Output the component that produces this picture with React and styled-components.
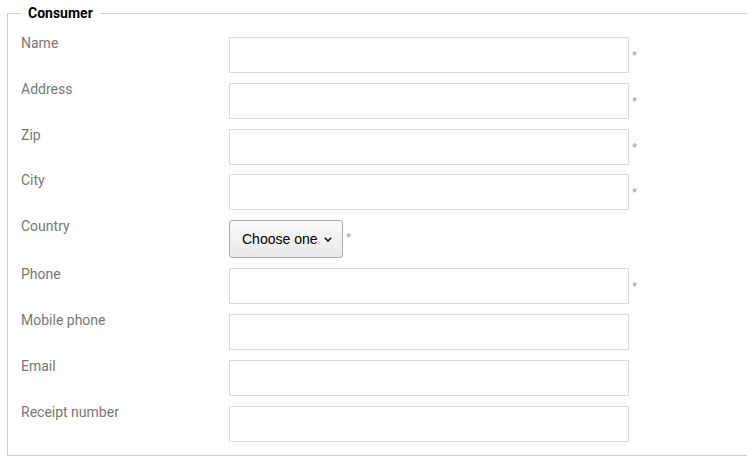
import React from "react";
import styled, { createGlobalStyle } from "styled-components";

const GlobalStyle = createGlobalStyle`
    html, body {
        margin: 0;
        padding: 0;
        background: #fff;
        overflow: hidden;
    }
    body {
        font-family: Roboto, "Liberation Sans", Arial, sans-serif;
    }
`

const Fieldset = styled.fieldset`
    margin: 3px 0 0 7px;
    width: 760px;
    box-sizing: border-box;
    border: 1px solid #cfcfcf;
    padding: 14px 13px 13px 13px;
    min-width: 0;
`

const Legend = styled.legend`
    font-family: Roboto, sans-serif;
    font-weight: 700;
    font-size: 14px;
    line-height: 20px;
    color: #000;
    padding: 0 7px;
`

const Rows = styled.div`
    display: flex;
    flex-direction: column;
    gap: 10px;
`

const Row = styled.div`
    display: flex;
    align-items: flex-start;
    margin-top: ${p => p.$pull ? -1 : 0}px;
`

const Label = styled.label`
    width: 208px;
    flex-shrink: 0;
    margin-top: -1px;
    font-size: 14px;
    line-height: 14px;
    color: #777;
`

const Field = styled.div`
    display: flex;
    align-items: center;
`

const TextInput = styled.input`
    width: 400px;
    height: 36px;
    box-sizing: border-box;
    border: 1px solid #dcdcdc;
    border-radius: 0;
    padding: 0 8px;
    font-family: Roboto, sans-serif;
    font-size: 14px;
    outline: none;
`

const SelectButton = styled.button`
    display: flex;
    align-items: center;
    gap: 6px;
    height: 38px;
    width: 114px;
    box-sizing: border-box;
    padding: 0 0 0 12px;
    white-space: nowrap;
    border: 1px solid #a9a9a9;
    border-radius: 3px;
    background: linear-gradient(#f9f9f9, #e9e9e9);
    font-family: "Liberation Sans", Arial, sans-serif;
    font-size: 14px;
    color: #000;
    cursor: pointer;
`

const Required = styled.span`
    margin-left: 3px;
    margin-top: ${p => p.$lift}px;
    font-size: 13px;
    color: #999;
    font-family: "Liberation Sans", Arial, sans-serif;
`

const Chevron = () => (
    <svg width="8" height="5" viewBox="0 0 8 5">
        <polyline points="0.8,0.8 4,4 7.2,0.8" fill="none" stroke="#000" strokeWidth="1.5" />
    </svg>
)

const fields = [
    { label: 'Name', required: true },
    { label: 'Address', required: true },
    { label: 'Zip', required: true },
    { label: 'City', required: true, pull: true },
    { label: 'Country', required: true, select: true },
    { label: 'Phone', required: true },
    { label: 'Mobile phone' },
    { label: 'Email' },
    { label: 'Receipt number' },
]

const App = () => {
    return (
        <>
        <GlobalStyle />
        <Fieldset>
            <Legend>Consumer</Legend>
            <Rows>
                {fields.map(f => (
                    <Row key={f.label} $pull={f.pull}>
                        <Label>{f.label}</Label>
                        <Field>
                            {f.select ? (
                                <SelectButton type="button">Choose one <Chevron /></SelectButton>
                            ) : (
                                <TextInput type="text" />
                            )}
                            {f.required && <Required $lift={f.select ? -4 : 0}>*</Required>}
                        </Field>
                    </Row>
                ))}
            </Rows>
        </Fieldset>
        </>
    )
}

export default App
